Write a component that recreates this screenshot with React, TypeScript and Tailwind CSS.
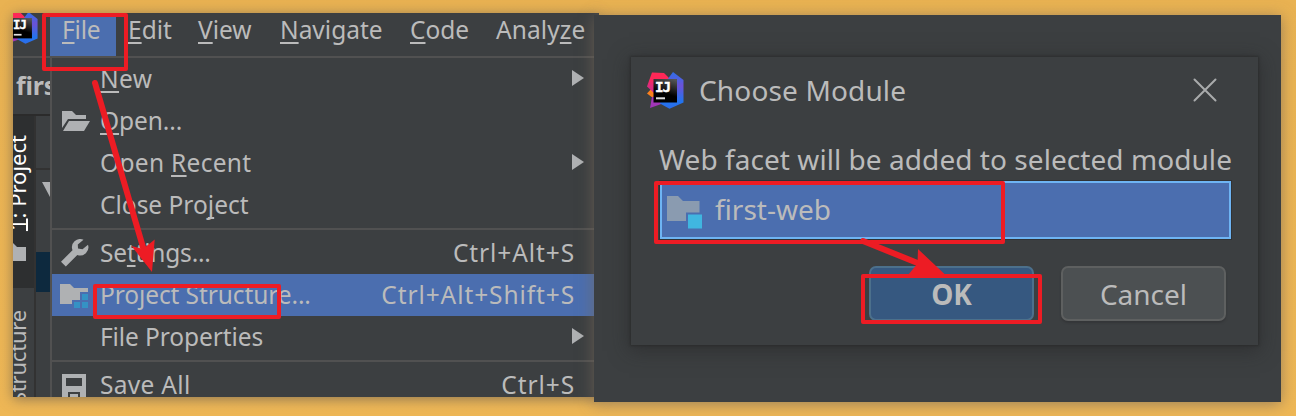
import React from "react";

function IdeaLogo({ id, className }: { id: string; className: string }) {
  return (
    <svg viewBox="0 0 37 37" className={className} aria-hidden="true">
      <defs>
        <linearGradient id={id + "pink"} x1="0.5" y1="0" x2="0.2" y2="1">
          <stop offset="0.3" stopColor="#fe2857" />
          <stop offset="1" stopColor="#c42c9b" />
        </linearGradient>
        <linearGradient id={id + "blue"} x1="0.5" y1="0" x2="0.5" y2="1">
          <stop offset="0" stopColor="#2f6fe8" />
          <stop offset="0.38" stopColor="#6b52d8" />
          <stop offset="0.8" stopColor="#2274ee" />
          <stop offset="1" stopColor="#2d6de9" />
        </linearGradient>
        <linearGradient id={id + "black"} x1="0.8" y1="0" x2="0.6" y2="0.65">
          <stop offset="0" stopColor="#555" />
          <stop offset="1" stopColor="#000" />
        </linearGradient>
      </defs>
      <path d="M0 21.5 5.5 15.5 10 18 8 27.500Z" fill="#fc801d" />
      <path d="M5 25 14 24 20 30 3 36Z" fill="#a136b8" />
      <path d="M5 .5 17 1 24 8 20 22 8 22 0 14.500Z" fill={`url(#${id}pink)`} />
      <path d="M26 0 36.500 8V30.500L22.500 36.700 13 31.500 20 8Z" fill={`url(#${id}blue)`} />
      <path d="M6.500 7H30V30.500H6.500Z" fill={`url(#${id}black)`} />
      <text x="8" y="20" fill="#fff" stroke="#fff" strokeWidth="0.4" fontSize="14.2" fontWeight="700" letterSpacing="-1" fontFamily="DejaVu Sans Mono, monospace">
        IJ
      </text>
      <path d="M9 25.300H18V27.300H9Z" fill="#ddd" />
    </svg>
  );
}

function Mnemonic({ text, at, offset = "underline-offset-[3px]" }: { text: string; at?: number; offset?: string }) {
  if (at === undefined) return <>{text}</>;
  return (
    <>
      {text.slice(0, at)}
      <span className={`underline decoration-2 [text-decoration-skip-ink:none] ${offset}`}>{text[at]}</span>
      {text.slice(at + 1)}
    </>
  );
}

const menuBar = [
  { text: "File", at: 0, cls: "w-[66px] bg-[#4b6eaf] tracking-[-0.2px]" },
  { text: "Edit", at: 0, cls: "w-[70px]" },
  { text: "View", at: 0, cls: "w-[82px]" },
  { text: "Navigate", at: 0, cls: "w-[130px]" },
  { text: "Code", at: 0, cls: "w-[86px]" },
  { text: "Analyze", at: 5, cls: "w-[115px] tracking-[0.1px]" },
];

type RowProps = {
  text: string;
  at?: number;
  cls?: string;
  keys?: string;
  submenu?: boolean;
  selected?: boolean;
  icon?: React.ReactNode;
};

function MenuRow({ text, at, cls = "", keys, submenu, selected, icon }: RowProps) {
  return (
    <div className={`flex h-[42px] shrink-0 items-center pr-[20px] ${selected ? "bg-[#4b6eaf]" : ""}`}>
      <div className="flex h-full w-[48px] shrink-0 items-center">{icon}</div>
      <span className={`flex-1 pt-px ${cls}`}>
        <Mnemonic text={text} at={at} />
      </span>
      {keys && <span className="-mr-px pt-px tracking-[0.9px]">{keys}</span>}
      {submenu && (
        <svg viewBox="0 0 12 16" className="-mr-[10px] mb-[2px] h-4 w-3">
          <path d="M0 0 12 8 0 16Z" fill="#afb1b3" />
        </svg>
      )}
    </div>
  );
}

function Separator() {
  return <div className="my-[2px] h-[2px] shrink-0 bg-[#515151]" />;
}

const openIcon = (
  <svg viewBox="0 0 28 20" className="ml-[10px] h-5 w-7">
    <path d="M0 0H10L14 4H24V8H6L0 17Z" fill="#afb1b3" />
    <path d="M7 10H28L22 20H1Z" fill="#afb1b3" />
  </svg>
);

const wrenchIcon = (
  <svg viewBox="0 0 28 28" className="ml-[9px] h-7 w-7">
    <path
      d="M22.500 .800A8.200 8.200 0 0 0 11.500 11.200L0 22.700 4.800 27.500 16.300 16A8.200 8.200 0 0 0 27 5.800L21.500 10.200 17 9.500 16.800 5.500Z"
      fill="#afb1b3"
    />
  </svg>
);

const structureIcon = (
  <svg viewBox="0 0 28 24" className="ml-[8px] mt-[2px] h-6 w-7">
    <path d="M0 0H10L14 4H28V8H20V16H12V20H0Z" fill="#afb1b3" />
    <path d="M22 10H28V16H22ZM14 18H20V24H14ZM22 18H28V24H22Z" fill="#3592c4" />
  </svg>
);

const saveIcon = (
  <svg viewBox="0 0 24 24" className="ml-[10px] mt-px h-6 w-6">
    <path d="M0 0H24V24H18V18H6V24H0ZM4 4V12H20V4Z" fill="#afb1b3" fillRule="evenodd" />
    <path d="M8 20H16V24H8Z" fill="#afb1b3" />
  </svg>
);

function SideBar() {
  return (
    <div className="flex w-[37px] shrink-0 flex-col overflow-hidden">
      <div className="h-[56px] shrink-0 pl-[3px] pt-[10px] text-[25px] font-bold leading-[34px] tracking-[-0.2px] whitespace-nowrap">
        first-web
      </div>
      <div className="h-[2px] shrink-0 bg-[#2b2b2b]" />
      <div className="flex min-h-0 flex-1">
        <div className="flex w-[21px] shrink-0 flex-col">
          <div className="flex h-[172px] shrink-0 flex-col items-end justify-end overflow-hidden bg-[#2d2f30]">
            <span className="mb-[12px] mr-px rotate-180 text-[22px] leading-[32px] text-white [writing-mode:vertical-rl] whitespace-nowrap">
              <Mnemonic text="1: Project" at={0} offset="underline-offset-[-3px]" />
            </span>
            <svg viewBox="0 0 21 19" className="mb-[26px] h-[19px] w-[21px] shrink-0">
              <path d="M0 0 4 4H13V18H0Z" fill="#afb1b3" />
            </svg>
          </div>
          <div className="flex flex-1 items-start justify-end overflow-hidden pt-[22px]">
            <span className="mr-px shrink-0 rotate-180 text-[22px] leading-[32px] tracking-[-0.2px] [writing-mode:vertical-rl] whitespace-nowrap">
              <Mnemonic text="7: Structure" at={0} />
            </span>
          </div>
        </div>
        <div className="w-[2px] shrink-0 bg-[#323232]" />
        <div className="flex flex-1 flex-col">
          <div className="h-[52px]" />
          <div className="h-[2px] bg-[#323232]" />
          <svg viewBox="0 0 14 16" className="mt-[12px] h-4 w-[14px]">
            <path d="M6 0H22L14 15Z" fill="#afb1b3" />
          </svg>
          <div className="mt-[54px] h-[40px] bg-[#0d293e]" />
        </div>
      </div>
    </div>
  );
}

function IdeWindow() {
  return (
    <div className="flex h-[384px] w-[586px] shrink-0 flex-col overflow-hidden bg-[#3c3f41] shadow-[0_2px_12px_rgba(100,90,80,0.7)]">
      <div className="flex h-[43px] shrink-0">
        <div className="w-[37px] shrink-0 overflow-hidden">
          <IdeaLogo id="bar" className="-ml-[7px] -mt-px h-[32px] w-[32px]" />
        </div>
        {menuBar.map((m) => (
          <div key={m.text} className={`h-[43px] shrink-0 pl-3 leading-[34px] ${m.cls}`}>
            <Mnemonic text={m.text} at={m.at} />
          </div>
        ))}
      </div>
      <div className="h-[2px] shrink-0 bg-[#515151]" />
      <div className="flex h-[339px]">
        <SideBar />
        <div className="w-[2px] shrink-0 bg-[#515151]" />
        <div className="flex flex-1 flex-col pr-[5px]">
          <MenuRow text="New" at={0} submenu cls="tracking-[0.4px]" />
          <MenuRow text="Open..." at={0} icon={openIcon} cls="tracking-[-0.1px]" />
          <MenuRow text="Open Recent" at={5} submenu cls="tracking-[0.3px]" />
          <MenuRow text="Close Project" at={9} />
          <Separator />
          <MenuRow text="Settings..." at={2} keys="Ctrl+Alt+S" icon={wrenchIcon} cls="tracking-[-0.2px]" />
          <MenuRow text="Project Structure..." keys="Ctrl+Alt+Shift+S" icon={structureIcon} selected cls="tracking-[-0.1px]" />
          <MenuRow text="File Properties" submenu cls="tracking-[-0.1px]" />
          <Separator />
          <MenuRow text="Save All" at={0} keys="Ctrl+S" icon={saveIcon} cls="tracking-[0.3px]" />
        </div>
      </div>
    </div>
  );
}

function ModuleDialog() {
  return (
    <div className="h-[288px] w-[627px] bg-[#3c3f41] pl-[29px] pr-[27px] text-[28px] shadow-[0_4px_18px_2px_rgba(35,35,35,0.5),0_0_2px_1px_rgba(35,35,35,0.5)]">
      <div className="-ml-[13px] flex h-[66px] items-center">
        <IdeaLogo id="dlg" className="h-[37px] w-[37px]" />
        <span className="ml-[15px] flex-1 tracking-[0.15px]">Choose Module</span>
        <svg viewBox="0 0 24 24" className="mr-[14px] h-6 w-6">
          <path d="M1.500 1.500 22.500 22.500M22.500 1.500 1.500 22.500" stroke="#a9abac" strokeWidth="2" strokeLinecap="round" />
        </svg>
      </div>
      <div className="-ml-px h-[58px] pt-[17px] leading-[38px] tracking-[0.06px] whitespace-nowrap">Web facet will be added to selected module</div>
      <div className="flex h-[58px] items-center border-2 border-[#6eb4f3] bg-[#4b6eaf] pl-[5px] text-[28px] outline outline-[#303234]">
        <svg viewBox="0 0 35 33" className="mt-[5px] h-[33px] w-[35px]">
          <path d="M0 0H11L16 5H32.500V16.500H19V25H0Z" fill="#8a9bb0" />
          <path d="M21 18.500H35V32.500H21Z" fill="#40b6e0" />
        </svg>
        <span className="ml-[13px] pb-[2px]">first-web</span>
      </div>
      <div className="mt-[27px] flex justify-end gap-[27px] pr-[5px] text-[28px]">
        <div className="flex h-[55px] w-[165px] items-center justify-center rounded-[7px] border-2 border-[#4c708c] bg-[#365880] font-bold">OK</div>
        <div className="flex h-[55px] w-[165px] items-center justify-center rounded-[7px] border-2 border-[#5e6060] bg-[#4c5052] shadow-[0_2px_2px_#343638]">
          Cancel
        </div>
      </div>
    </div>
  );
}

function Annotations() {
  return (
    <>
      <div className="absolute left-[42px] top-[13px] h-[58px] w-[86px] rounded-[2px] border-4 border-[#ed1c24]" />
      <div className="absolute left-[93px] top-[284px] h-[35px] w-[188px] rounded-[2px] border-4 border-[#ed1c24]" />
      <div className="absolute left-[654px] top-[181px] h-[63px] w-[351px] rounded-[2px] border-4 border-[#ed1c24]" />
      <div className="absolute left-[861px] top-[274px] h-[50px] w-[181px] rounded-[2px] border-4 border-[#ed1c24]" />
      <svg viewBox="0 0 1296 416" className="absolute left-0 top-0 h-[416px] w-[1296px]" fill="#ed1c24" stroke="#ed1c24">
        <path d="M95 83 145 254M863 241 920 264" strokeWidth="6" strokeLinecap="round" />
        <path d="M131.500 246 143 249 154.700 239.500 152 272ZM918 249 945 274.500H908.500L917.500 263.500Z" stroke="none" />
      </svg>
    </>
  );
}

export default function App() {
  return (
    <div className="relative flex h-[416px] w-[1296px] items-start overflow-hidden bg-linear-to-b from-[#e9b252] to-[#eeb756] pl-[13px] pt-[13px] font-['Noto_Sans',sans-serif] text-[24.5px] text-[#bbbbbb]">
      <IdeWindow />
      <div className="relative -ml-[5px] mt-[2px] h-[387px] w-[687px] shrink-0 bg-[#3c3f41] pl-[37px] pt-[42px] shadow-[0_2px_14px_rgba(120,105,90,0.7)]">
        <ModuleDialog />
      </div>
      <Annotations />
    </div>
  );
}
